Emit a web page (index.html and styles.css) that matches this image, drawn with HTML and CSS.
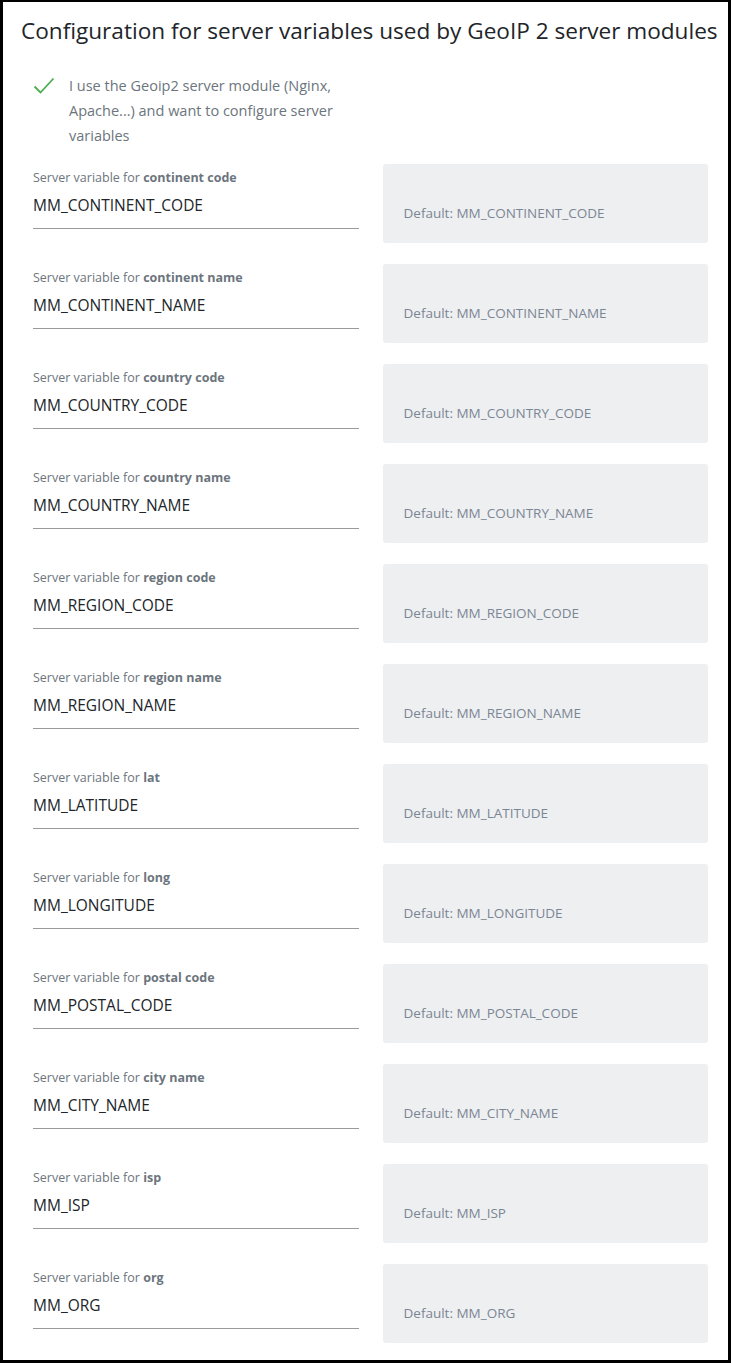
FILE: index.html
```html
<!DOCTYPE html>
<html>
<head>
<meta charset="utf-8">
<link rel="stylesheet" href="styles.css">
</head>
<body>
<div class="frame">
  <h1 class="title">Configuration for server variables used by GeoIP 2 server modules</h1>
  <div class="check">
    <svg class="check-icon" width="22" height="18" viewBox="0 0 22 18"><path d="M1.5 9.5 L7.5 15.5 L20.5 1.5" fill="none" stroke="#4cae4f" stroke-width="1.8"/></svg>
    <span class="check-text">I use the Geoip2 server module (Nginx, Apache...) and want to configure server variables</span>
  </div>
  <div class="rows">
    <div class="row"><div class="field"><div class="label">Server variable for <b>continent code</b></div><div class="value">MM_CONTINENT_CODE</div></div><div class="default">Default: MM_CONTINENT_CODE</div></div>
    <div class="row"><div class="field"><div class="label">Server variable for <b>continent name</b></div><div class="value">MM_CONTINENT_NAME</div></div><div class="default">Default: MM_CONTINENT_NAME</div></div>
    <div class="row"><div class="field"><div class="label">Server variable for <b>country code</b></div><div class="value">MM_COUNTRY_CODE</div></div><div class="default">Default: MM_COUNTRY_CODE</div></div>
    <div class="row"><div class="field"><div class="label">Server variable for <b>country name</b></div><div class="value">MM_COUNTRY_NAME</div></div><div class="default">Default: MM_COUNTRY_NAME</div></div>
    <div class="row"><div class="field"><div class="label">Server variable for <b>region code</b></div><div class="value">MM_REGION_CODE</div></div><div class="default">Default: MM_REGION_CODE</div></div>
    <div class="row"><div class="field"><div class="label">Server variable for <b>region name</b></div><div class="value">MM_REGION_NAME</div></div><div class="default">Default: MM_REGION_NAME</div></div>
    <div class="row"><div class="field"><div class="label">Server variable for <b>lat</b></div><div class="value">MM_LATITUDE</div></div><div class="default">Default: MM_LATITUDE</div></div>
    <div class="row"><div class="field"><div class="label">Server variable for <b>long</b></div><div class="value">MM_LONGITUDE</div></div><div class="default">Default: MM_LONGITUDE</div></div>
    <div class="row"><div class="field"><div class="label">Server variable for <b>postal code</b></div><div class="value">MM_POSTAL_CODE</div></div><div class="default">Default: MM_POSTAL_CODE</div></div>
    <div class="row"><div class="field"><div class="label">Server variable for <b>city name</b></div><div class="value">MM_CITY_NAME</div></div><div class="default">Default: MM_CITY_NAME</div></div>
    <div class="row"><div class="field"><div class="label">Server variable for <b>isp</b></div><div class="value">MM_ISP</div></div><div class="default">Default: MM_ISP</div></div>
    <div class="row"><div class="field"><div class="label">Server variable for <b>org</b></div><div class="value">MM_ORG</div></div><div class="default">Default: MM_ORG</div></div>
  </div>
</div>
</body>
</html>
```
FILE: styles.css
```css
* { box-sizing: border-box; }
html, body { margin: 0; padding: 0; background: #fff; }
body { font-family: "Open Sans", "Noto Sans", sans-serif; color: #212529; }
.frame {
  width: 731px;
  height: 1363px;
  border-style: solid;
  border-color: #000;
  border-width: 2px 3px 3px 3px;
  padding: 0 8px 0 18px;
  overflow: hidden;
}
.title {
  margin: 13px 0 0 0;
  font-weight: 400;
  font-size: 22.6px;
  line-height: 32px;
  color: #212529;
  white-space: nowrap;
}
.check {
  display: flex;
  align-items: flex-start;
  margin: 29px 0 0 12px;
  width: 330px;
}
.check-icon { flex: none; margin: 1px 14px 0 0; }
.check-text {
  font-size: 14.5px;
  line-height: 25px;
  color: #6c757d;
  margin-top: -3px;
}
.rows { margin-top: 16px; }
.row {
  display: grid;
  grid-template-columns: 1fr 1fr;
  column-gap: 24px;
  padding: 0 12px;
  margin-bottom: 21px;
}
.field { padding-top: 5px; }
.label {
  font-size: 12.5px;
  line-height: 18px;
  color: #6c757d;
}
.label b { font-weight: 700; color: #6c757d; }
.value {
  margin-top: 6px;
  font-size: 15.5px;
  line-height: 24px;
  color: #212529;
  padding-bottom: 11px;
  border-bottom: 1px solid #9a9a9a;
}
.default {
  height: 79px;
  background: #eeeff1;
  border-radius: 3px;
  padding: 39px 0 0 21px;
  font-size: 13.5px;
  line-height: 20px;
  color: #7b8694;
}
```
